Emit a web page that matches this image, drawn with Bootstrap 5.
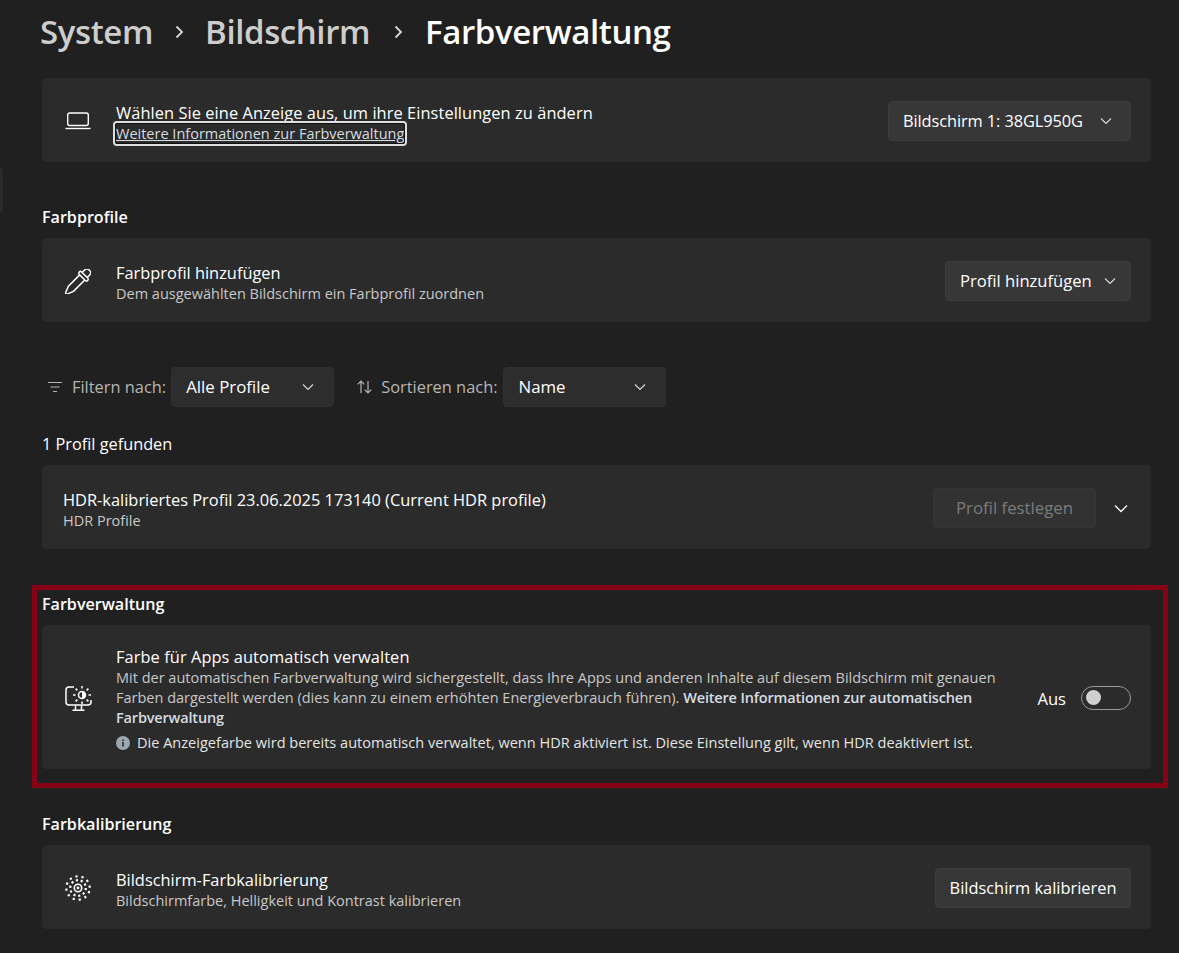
<!DOCTYPE html>
<html lang="de">
<head>
<meta charset="utf-8">
<title>Farbverwaltung</title>
<link href="https://cdn.jsdelivr.net/npm/bootstrap@5.3.0/dist/css/bootstrap.min.css" rel="stylesheet">
<style>
html,body{height:953px;overflow:hidden}
body{background:#202020;color:#fff;font-family:"Open Sans","Noto Sans","Liberation Sans",sans-serif;font-size:16px}
.page-wrap{width:1109px;margin-left:42px}
.side-sliver{position:absolute;left:0;top:168px;width:3px;height:44px;background:#2a2a2a;border-radius:0 4px 4px 0}
.crumbs{height:64px;margin-bottom:14px;margin-left:-2px;font-size:33px;font-weight:600;line-height:64px;letter-spacing:-.4px}
.crumbs .past{color:#cdcdcd}
.crumbs .sep{width:52px;display:flex;justify-content:center;align-items:center}
.crumbs .sep.wide-sep{width:55px}
.set-card{background:#2b2b2b;border:1px solid #292929;border-radius:4px;height:84px;padding:2px 19px 0 0}
.set-card.tall{height:144px}
.set-card.plain{padding-left:20px}
.ico{width:70px;margin-right:3px;flex:none;display:flex;justify-content:center;color:#fff}
.txt{margin-top:3px}
.t1{font-size:16.4px;line-height:21px;margin-bottom:1px;white-space:nowrap}
.t1.lng{letter-spacing:.07px}
.t2{font-size:14.5px;line-height:20px;color:#c8c8c8;white-space:nowrap}
.t2 b{color:#d6dde2;font-weight:600;letter-spacing:-.17px}
.hd{font-size:16.1px;font-weight:600;line-height:22px;margin-bottom:10px}
.hd.r1{margin-top:44px}
.hd.r2{margin-top:26px;font-weight:400;font-size:16.3px}
.hd.r3{margin-top:25px}
.win-btn{background:#373737;border:1px solid #3c3c3c;border-radius:4px;height:40px;color:#fff;font-size:16.4px;padding:0 14px;white-space:nowrap;display:flex;align-items:center;justify-content:space-between;flex:none}
.win-btn:hover{background:#373737;color:#fff;border-color:#3c3c3c}
.w-mon{width:243px;letter-spacing:-.1px}.w-add{width:186px;font-size:16.6px}.w-filter{width:163px;background:#2d2d2d;border-color:#303030;font-size:16.85px}.w-cal{width:196px;justify-content:center}
.w-filter svg{margin-right:5px}
.w-set{width:163px;justify-content:center;font-size:16.8px}
.win-btn:disabled{background:#323232;border-color:#363636;color:#7c7c7c;opacity:1}
.filter-row{margin-top:45px;height:40px}
.lbl{color:#b5b5b5;font-size:16.4px;white-space:nowrap}
.f-ico{margin-left:6px;margin-right:10px}
.s-ico{margin-left:23px;margin-right:9px}
.mini{margin-left:5px}
.mini2{margin-left:6px}
.red-box{border:5px solid #860016;margin:36px -17px 0 -10px;padding:3px 12px 14px 5px}
.focus-box{border:2px solid #dfdfdf;outline:1px solid #111;outline-offset:-3px;border-radius:4px;padding:1px 1px 0;margin:-3px 0 -2px -3px;display:inline-block;line-height:20px;color:#d5dde0;text-decoration:underline}
.toggle-track{width:50px;height:24px;border:1px solid #9a9a9a;border-radius:12px;display:flex;align-items:center;padding-left:4px;flex:none}
.knob{width:15px;height:15px;border-radius:50%;background:#d0d0d0}
.aus{margin-right:15px;margin-top:2px;font-size:16.6px}
.note{margin-top:5px;color:#e4e4e4;letter-spacing:.02px}
.note svg{flex:none;margin-right:7px}
.exp{margin:0 3px 0 18px}
</style>
</head>
<body>
<div class="side-sliver"></div>
<main class="page-wrap">
  <nav class="crumbs d-flex align-items-center">
    <span class="past">System</span>
    <span class="sep"><svg width="10" height="14" viewBox="0 0 10 14" fill="none" stroke="#d8d8d8" stroke-width="1.800"><path d="M2.500 1.500 8 7l-5.500 5.500"/></svg></span>
    <span class="past">Bildschirm</span>
    <span class="sep wide-sep"><svg width="10" height="14" viewBox="0 0 10 14" fill="none" stroke="#d8d8d8" stroke-width="1.800"><path d="M2.500 1.500 8 7l-5.500 5.500"/></svg></span>
    <span>Farbverwaltung</span>
  </nav>

  <section class="set-card card flex-row align-items-center justify-content-between">
    <div class="d-flex align-items-center">
      <div class="ico"><svg width="26" height="18" viewBox="0 0 26 18" fill="none" stroke="#fff" stroke-width="1.400"><rect x="2.700" y="1" width="20.600" height="12.500" rx="2"/><path d="M.5 16.500h25"/></svg></div>
      <div class="txt">
        <div class="t1 lng">Wählen Sie eine Anzeige aus, um ihre Einstellungen zu ändern</div>
        <div class="t2"><a class="focus-box" href="#">Weitere Informationen zur Farbverwaltung</a></div>
      </div>
    </div>
    <button class="btn win-btn w-mon" type="button">Bildschirm 1: 38GL950G<svg class="me-1" width="12" height="8" viewBox="0 0 12 8" fill="none" stroke="#ddd" stroke-width="1.100"><path d="M1 1.500 6 6.500l5-5"/></svg></button>
  </section>

  <h2 class="hd r1">Farbprofile</h2>
  <section class="set-card card flex-row align-items-center justify-content-between">
    <div class="d-flex align-items-center">
      <div class="ico"><svg width="26" height="25" viewBox="-13 -12.500 26 25" fill="none" stroke="#fff" stroke-width="1.500" stroke-linejoin="round"><g transform="translate(-.4 .6) rotate(45)"><path d="M-3.600-10v-3.200a3.600 3.600 0 0 1 7.200 0V-10"/><rect x="-6" y="-10" width="12" height="3.400" rx="1.700"/><path d="M-3.600-6.600V9.500L-.8 16.500H.8L3.600 9.500V-6.600"/></g></svg></div>
      <div class="txt">
        <div class="t1">Farbprofil hinzufügen</div>
        <div class="t2">Dem ausgewählten Bildschirm ein Farbprofil zuordnen</div>
      </div>
    </div>
    <button class="btn win-btn w-add" type="button">Profil hinzufügen<svg width="12" height="8" viewBox="0 0 12 8" fill="none" stroke="#ddd" stroke-width="1.100"><path d="M1 1.500 6 6.500l5-5"/></svg></button>
  </section>

  <div class="filter-row d-flex align-items-center">
    <svg class="f-ico" width="14" height="12" viewBox="0 0 14 12" fill="none" stroke="#b5b5b5" stroke-width="1.200"><path d="M0 1.500h14M2.500 6h9M5 10.500h4"/></svg>
    <span class="lbl">Filtern nach:</span>
    <button class="btn win-btn w-filter mini" type="button">Alle Profile<svg width="12" height="8" viewBox="0 0 12 8" fill="none" stroke="#ddd" stroke-width="1.100"><path d="M1 1.500 6 6.500l5-5"/></svg></button>
    <svg class="s-ico" width="15" height="14" viewBox="0 0 15 14" fill="none" stroke="#b5b5b5" stroke-width="1.200"><path d="M4 13V1M.7 4.300 4 1l3.300 3.300M11 1v12M7.700 9.700 11 13l3.300-3.300"/></svg>
    <span class="lbl">Sortieren nach:</span>
    <button class="btn win-btn w-filter mini2" type="button">Name<svg width="12" height="8" viewBox="0 0 12 8" fill="none" stroke="#ddd" stroke-width="1.100"><path d="M1 1.500 6 6.500l5-5"/></svg></button>
  </div>

  <h2 class="hd r2">1 Profil gefunden</h2>
  <section class="set-card plain card flex-row align-items-center justify-content-between">
    <div class="txt">
      <div class="t1">HDR-kalibriertes Profil 23.06.2025 173140 (Current HDR profile)</div>
      <div class="t2">HDR Profile</div>
    </div>
    <div class="d-flex align-items-center">
      <button class="btn win-btn w-set" type="button" disabled>Profil festlegen</button>
      <svg class="exp" width="14" height="9" viewBox="0 0 14 9" fill="none" stroke="#fff" stroke-width="1.300"><path d="M1 1.500 7 7.500l6-6"/></svg>
    </div>
  </section>

  <div class="red-box">
    <h2 class="hd">Farbverwaltung</h2>
    <section class="set-card tall card flex-row align-items-center justify-content-between">
      <div class="d-flex align-items-center">
        <div class="ico"><svg width="27" height="25" viewBox="0 0 27 25" fill="none" stroke="#fff" stroke-width="1.500"><path d="M9 1H4C2.300 1 1 2.300 1 4v12c0 1.700 1.300 3 3 3h19c1.700 0 3-1.300 3-3v-2"/><path d="M10.500 19v5M16.500 19v5M7.500 24.200h12"/><path d="M17 5.500a3.500 3.500 0 0 0 0 7z" fill="#fff" stroke="none" transform="matrix(-1 0 0 1 34 0)"/><circle cx="17" cy="9" r="3.500"/><path d="M17 0v2.500M17 15.500V18M8 9h2.500M23.500 9H26M10.600 2.600l1.800 1.800M21.600 13.600l1.800 1.800M10.600 15.400l1.800-1.800M21.600 4.400l1.800-1.800"/></svg></div>
        <div class="txt">
          <div class="t1 lng">Farbe für Apps automatisch verwalten</div>
          <div class="t2">Mit der automatischen Farbverwaltung wird sichergestellt, dass Ihre Apps und anderen Inhalte auf diesem Bildschirm mit genauen<br>Farben dargestellt werden (dies kann zu einem erhöhten Energieverbrauch führen). <b>Weitere Informationen zur automatischen<br>Farbverwaltung</b></div>
          <div class="t2 note d-flex align-items-center"><svg width="14" height="14" viewBox="0 0 14 14"><circle cx="7" cy="7" r="7" fill="#9aa7b0"/><rect x="6.200" y="6" width="1.600" height="4.500" fill="#2b2b2b"/><rect x="6.200" y="3.500" width="1.600" height="1.600" fill="#2b2b2b"/></svg>Die Anzeigefarbe wird bereits automatisch verwaltet, wenn HDR aktiviert ist. Diese Einstellung gilt, wenn HDR deaktiviert ist.</div>
        </div>
      </div>
      <div class="d-flex align-items-center">
        <span class="aus">Aus</span>
        <span class="toggle-track"><span class="knob"></span></span>
      </div>
    </section>
  </div>

  <h2 class="hd r3">Farbkalibrierung</h2>
  <section class="set-card card flex-row align-items-center justify-content-between">
    <div class="d-flex align-items-center">
      <div class="ico"><svg width="26" height="26" viewBox="0 0 26 26" fill="none" stroke="#fff"><circle cx="13" cy="13" r="3.700" stroke-width="1.600"/><circle cx="13" cy="13" r="1.400" fill="#fff" stroke="none"/><circle cx="13" cy="13" r="7.800" stroke-width="2.200" stroke-dasharray="2.200 2.700"/><circle cx="13" cy="13" r="11.700" stroke-width="2.200" stroke-dasharray="2.200 3.930" stroke-dashoffset="3"/></svg></div>
      <div class="txt">
        <div class="t1">Bildschirm-Farbkalibrierung</div>
        <div class="t2">Bildschirmfarbe, Helligkeit und Kontrast kalibrieren</div>
      </div>
    </div>
    <button class="btn win-btn w-cal" type="button">Bildschirm kalibrieren</button>
  </section>
</main>
<script src="https://cdn.jsdelivr.net/npm/bootstrap@5.3.0/dist/js/bootstrap.bundle.min.js"></script>
</body>
</html>
